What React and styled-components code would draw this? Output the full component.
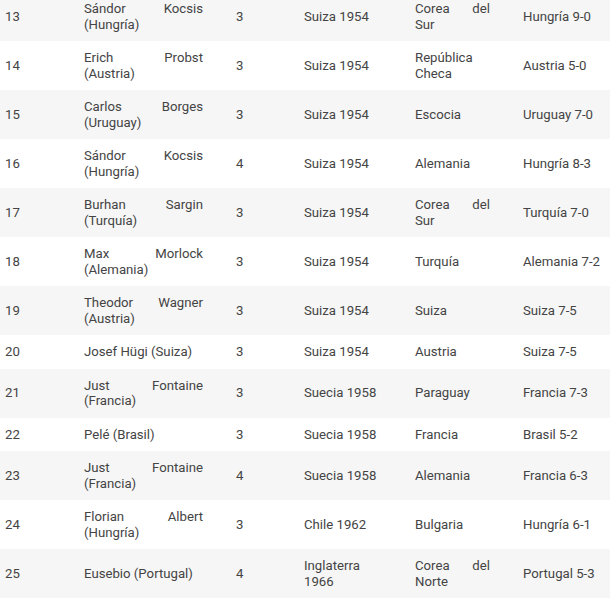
import React from 'react';
import styled, { createGlobalStyle } from 'styled-components';

const GlobalStyle = createGlobalStyle`
  html, body {
    margin: 0;
    padding: 0;
    background: #ffffff;
    overflow: hidden;
  }
`;

const Wrapper = styled.div`
  width: 610px;
  overflow: hidden;
  margin-top: -8px;
`;

const Table = styled.table`
  width: 640px;
  table-layout: fixed;
  border-collapse: collapse;
  font-family: Roboto, "Liberation Sans", sans-serif;
  font-size: 13.2px;
  line-height: 15.5px;
  color: #444444;
`;

const Row = styled.tr`
  background: ${p => (p.$shaded ? '#f6f6f6' : '#ffffff')};
`;

const Cell = styled.td`
  padding: 9px 28px 9px 5px;
  vertical-align: middle;
  text-align: ${p => (p.$justify ? 'justify' : 'left')};
`;

const columns = [79, 152, 68, 111, 108, 122];

const rows = [
  ['13', 'Sándor Kocsis (Hungría)', '3', 'Suiza 1954', 'Corea del Sur', 'Hungría 9-0'],
  ['14', 'Erich Probst (Austria)', '3', 'Suiza 1954', 'República Checa', 'Austria 5-0'],
  ['15', 'Carlos Borges (Uruguay)', '3', 'Suiza 1954', 'Escocia', 'Uruguay 7-0'],
  ['16', 'Sándor Kocsis (Hungría)', '4', 'Suiza 1954', 'Alemania', 'Hungría 8-3'],
  ['17', 'Burhan Sargin (Turquía)', '3', 'Suiza 1954', 'Corea del Sur', 'Turquía 7-0'],
  ['18', 'Max Morlock (Alemania)', '3', 'Suiza 1954', 'Turquía', 'Alemania 7-2'],
  ['19', 'Theodor Wagner (Austria)', '3', 'Suiza 1954', 'Suiza', 'Suiza 7-5'],
  ['20', 'Josef Hügi (Suiza)', '3', 'Suiza 1954', 'Austria', 'Suiza 7-5'],
  ['21', 'Just Fontaine (Francia)', '3', 'Suecia 1958', 'Paraguay', 'Francia 7-3'],
  ['22', 'Pelé (Brasil)', '3', 'Suecia 1958', 'Francia', 'Brasil 5-2'],
  ['23', 'Just Fontaine (Francia)', '4', 'Suecia 1958', 'Alemania', 'Francia 6-3'],
  ['24', 'Florian Albert (Hungría)', '3', 'Chile 1962', 'Bulgaria', 'Hungría 6-1'],
  ['25', 'Eusebio (Portugal)', '4', 'Inglaterra 1966', 'Corea del Norte', 'Portugal 5-3'],
];

const App = () => (
  <>
    <GlobalStyle />
    <Wrapper>
      <Table>
        <colgroup>
          {columns.map((w, i) => (
            <col key={i} style={{ width: w }} />
          ))}
        </colgroup>
        <tbody>
          {rows.map((r, i) => (
            <Row key={r[0]} $shaded={i % 2 === 0}>
              <Cell>{r[0]}</Cell>
              <Cell $justify>{r[1]}</Cell>
              <Cell>{r[2]}</Cell>
              <Cell>{r[3]}</Cell>
              <Cell $justify>{r[4]}</Cell>
              <Cell>{r[5]}</Cell>
            </Row>
          ))}
        </tbody>
      </Table>
    </Wrapper>
  </>
);

export default App;
